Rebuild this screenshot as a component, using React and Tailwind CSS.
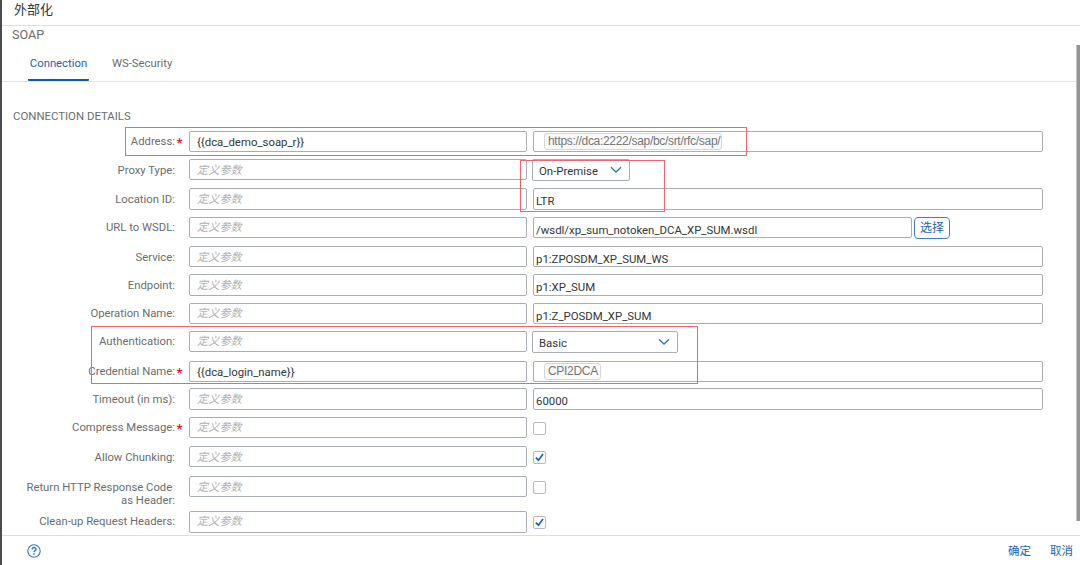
const ui = "font-['Roboto','Noto_Sans_CJK_SC',sans-serif]";

function Chevron() {
  return (
    <svg width="12" height="8" viewBox="0 0 12 8" fill="none" stroke="#2f78bd" strokeWidth="1.3">
      <path d="M1 1.2 6 6 11 1.2" />
    </svg>
  );
}

function Value({ text, width = "w-[510px]", height = "h-[21px]" }) {
  return (
    <div className={`${width} ${height} shrink-0 rounded-[2px] border border-[#a9adb5] bg-white pl-[2px] pt-[2px] text-[11.4px] leading-[20px] text-[#32363a]`}>
      {text}
    </div>
  );
}

function Token({ text, width }) {
  return (
    <div className="flex h-[21px] w-[510px] items-center rounded-[2px] border border-[#a9adb5] bg-white pl-[10px]">
      <div className={`${width} h-[17px] whitespace-nowrap rounded-[3px] border border-[#d5d5d5] bg-[#fafafa] pl-[3px] font-['Liberation_Sans',sans-serif] text-[12px] leading-[15px] tracking-[-0.31px] text-[#777]`}>
        {text}
      </div>
    </div>
  );
}

function Select({ text, width }) {
  return (
    <div className={`${width} -ml-px flex h-[22px] items-center justify-between rounded-[2px] border border-[#a9adb5] bg-white pl-[6px] pr-[7px] text-[11.4px] text-[#32363a]`}>
      <span className="pt-px leading-[20px]">{text}</span>
      <Chevron />
    </div>
  );
}

function Check({ on }) {
  return (
    <div className="mt-[5px] flex h-[13px] w-[13px] items-center justify-center rounded-[2px] border border-[#b5b9c1] bg-white">
      {on && (
        <svg width="9" height="9" viewBox="0 0 9 9" fill="none" stroke="#1b64ad" strokeWidth="1.7">
          <path d="M.8 4.6 3.5 7.2 8 1" />
        </svg>
      )}
    </div>
  );
}

const rows = [
  { label: "Address:", h: "h-[28px]", req: true, param: "{{dca_demo_soap_r}}", field: <Token text="https://dca:2222/sap/bc/srt/rfc/sap/" width="w-[178px]" /> },
  { label: "Proxy Type:", h: "h-[29px]", low: true, field: <Select text="On-Premise" width="w-[98px]" /> },
  { label: "Location ID:", h: "h-[29px]", low: true, box: "h-[22px]", field: <Value text="LTR" height="h-[22px]" /> },
  {
    label: "URL to WSDL:",
    h: "h-[29px]",
    field: (
      <div className="flex gap-[2px]">
        <Value text="/wsdl/xp_sum_notoken_DCA_XP_SUM.wsdl" width="w-[379px]" />
        <button className="h-[22px] w-[36px] rounded-[4px] border border-[#3f7fbe] text-[12px] leading-[20px] text-[#1b64ad]">选择</button>
      </div>
    ),
  },
  { label: "Service:", h: "h-[28px]", low: true, field: <Value text="p1:ZPOSDM_XP_SUM_WS" /> },
  { label: "Endpoint:", h: "h-[29px]", low: true, box: "h-[22px]", field: <Value text="p1:XP_SUM" height="h-[22px]" /> },
  { label: "Operation Name:", h: "h-[28px]", field: <Value text="p1:Z_POSDM_XP_SUM" /> },
  { label: "Authentication:", h: "h-[30px]", field: <Select text="Basic" width="w-[146px]" /> },
  { label: "Credential Name:", h: "h-[27px]", req: true, param: "{{dca_login_name}}", field: <Token text="CPI2DCA" width="w-[57px]" /> },
  { label: "Timeout (in ms):", h: "h-[29px]", low: true, box: "h-[22px]", field: <Value text="60000" height="h-[22px]" /> },
  { label: "Compress Message:", h: "h-[29px]", req: true, field: <Check /> },
  { label: "Allow Chunking:", h: "h-[30px]", low: true, field: <Check on /> },
  { label: "Return HTTP Response Code\u00a0\nas Header:", h: "h-[35px]", low: true, field: <Check /> },
  { label: "Clean-up Request Headers:", h: "h-[23px]", box: "h-[22px]", field: <Check on /> },
];

function Row({ label, h, req, param, field, low, box = "h-[21px]" }) {
  return (
    <div className={`flex items-start ${h}`}>
      <div className={`w-[173px] shrink-0 whitespace-pre-line text-right text-[11.3px] leading-[13px] text-[#6a6d70] ${low ? "pt-[5px]" : "pt-[4px]"}`}>{label}</div>
      <div className="w-[14px] shrink-0 pl-[1.5px] pt-[4px] text-[13px] font-bold leading-[15px] text-[#d22]">{req ? "*" : ""}</div>
      <div className={`mr-[6px] ${box} w-[338px] shrink-0 rounded-[2px] border border-[#a9adb5] pl-[7px] ${low ? "leading-[22px]" : "leading-[20px]"} ${param ? "text-[11.4px] text-[#32363a]" : "text-[11.2px] italic text-[#b0b2b4]"}`}>
        {param || "定义参数"}
      </div>
      {field}
    </div>
  );
}

export default function App() {
  return (
    <div className={`relative flex h-[565px] w-[1080px] overflow-hidden bg-white ${ui}`}>
      <div className="w-[2px] shrink-0 bg-[#4a4c50]" />
      <div className="flex min-w-0 flex-1 flex-col">
        <header className="h-[26px] shrink-0 border-b border-[#dedede] pl-[12px] text-[13px] leading-[19px] text-[#32363a]">外部化</header>
        <main className="flex min-h-0 flex-1">
          <div className="min-w-0 flex-1">
            <div className="h-[24px] pl-[10px] text-[12.6px] leading-[18px] text-[#6a6d70]">SOAP</div>
            <nav className="flex h-[32px] gap-[20px] border-b border-[#e2e2e2] pl-[26px] text-[11.3px] leading-[27px]">
              <div className="h-[31px] w-[61px] rounded-b-[1px] border-b-2 border-[#1558a5] text-center text-[#1b64ad]">Connection</div>
              <div className="pl-[3px] text-[#6a6d70]">WS-Security</div>
            </nav>
            <h2 className="h-[49px] pl-[11px] pt-[26px] text-[11.4px] leading-[16px] text-[#6a6d70]">CONNECTION DETAILS</h2>
            <div>
              {rows.map((r) => (
                <Row key={r.label} {...r} />
              ))}
            </div>
          </div>
          <div className="mt-[19px] h-[476px] w-[4px] shrink-0 border-l border-[#c4c4c4] bg-[#949494]" />
        </main>
        <footer className="flex h-[30px] shrink-0 items-center border-t border-[#dedede] pl-[25px] text-[11.5px] text-[#1b64ad]">
          <svg width="14" height="14" viewBox="0 0 14 14" fill="none" stroke="#2f78bd" strokeWidth="1.1">
            <circle cx="7" cy="7" r="6.2" />
            <path d="M5.1 5.4c0-2.5 3.9-2.5 3.9-.1 0 1.3-2 1.4-2 3" strokeWidth="1.4" />
            <path d="M7 9.3v1.5" strokeWidth="1.5" />
          </svg>
          <span className="ml-auto pt-[2px]">确定</span>
          <span className="ml-[19px] mr-[7px] pt-[2px]">取消</span>
        </footer>
      </div>
      <div className="pointer-events-none absolute left-[125px] top-[127px] h-[29px] w-[622px] border border-[#ee6670]" />
      <div className="pointer-events-none absolute left-[520px] top-[160px] h-[52px] w-[145px] border border-[#ee6670]" />
      <div className="pointer-events-none absolute left-[91px] top-[326px] h-[58px] w-[607px] border border-[#ee6670]" />
    </div>
  );
}
